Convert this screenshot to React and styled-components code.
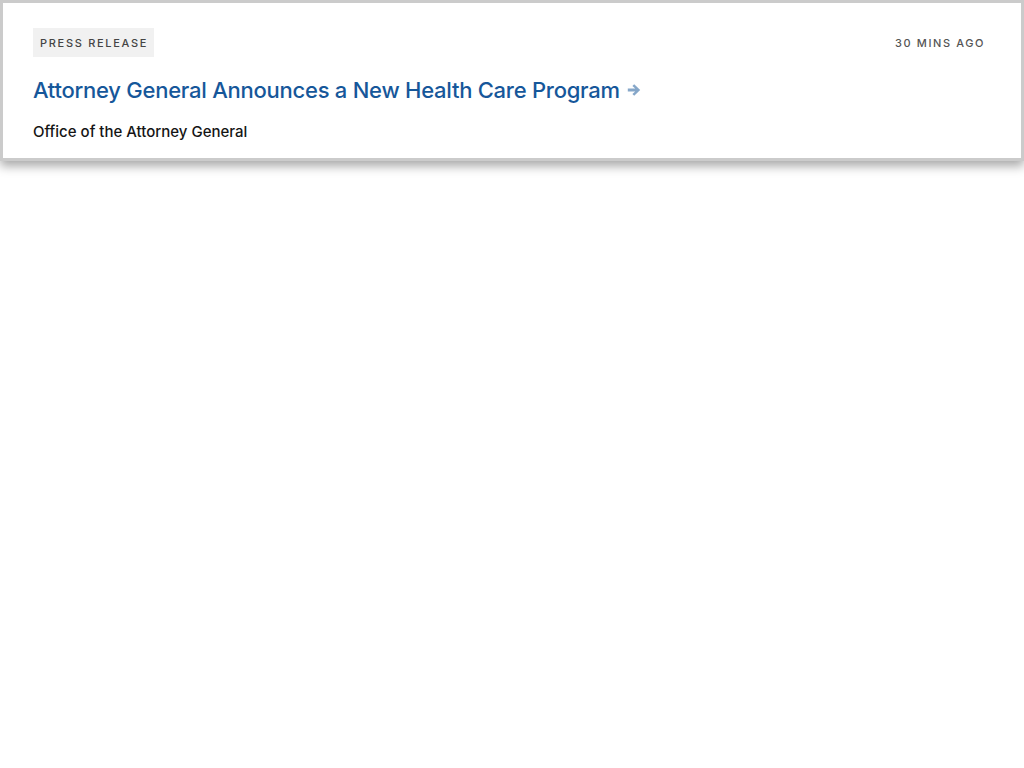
import React from "react";
import styled, { createGlobalStyle } from "styled-components";

const Global = createGlobalStyle`
  html, body { margin: 0; padding: 0; background: #fff; }
  body { font-family: Inter, "Noto Sans", sans-serif; }
`;

const Page = styled.main`
  padding-bottom: 20px;
`;

const Card = styled.article`
  position: relative;
  box-sizing: border-box;
  width: 100%;
  height: 161px;
  border: 3px solid #cbcbcb;
  box-shadow: 0 5px 10px 0 rgba(0, 0, 0, 0.35);
  background: #fff;
  padding: 25px 36px 0 30px;
`;

const Header = styled.div`
  display: flex;
  justify-content: space-between;
  align-items: center;
`;

const Badge = styled.span`
  display: inline-flex;
  align-items: center;
  height: 29px;
  padding: 0 6px 0 7px;
  background: #f1f1f1;
  color: #444;
  font-size: 11px;
  font-weight: 500;
  letter-spacing: 1.7px;
  text-transform: uppercase;
`;

const Time = styled.span`
  color: #555;
  font-size: 11px;
  font-weight: 500;
  letter-spacing: 1.6px;
  text-transform: uppercase;
`;

const Title = styled.h2`
  margin: 19px 0 0;
  display: flex;
  align-items: center;
  gap: 7px;
  font-size: 22px;
  font-weight: 500;
  letter-spacing: -0.25px;
  line-height: 28px;
`;

const TitleLink = styled.a`
  color: #16579a;
  text-decoration: none;
`;

const Arrow = styled.svg`
  width: 14px;
  height: 14px;
  fill: #86a7c9;
  flex: none;
`;

const Source = styled.div`
  margin-top: 18px;
  color: #151515;
  font-size: 15px;
  font-weight: 500;
  line-height: 20px;
`;

export default function App() {
  return (
    <Page>
      <Global />
      <Card>
        <Header>
          <Badge>Press Release</Badge>
          <Time>30 mins ago</Time>
        </Header>
        <Title>
          <TitleLink href="#">Attorney General Announces a New Health Care Program</TitleLink>
          <Arrow viewBox="0 0 14 14" aria-hidden="true">
            <path d="M7.2 1.2 L13.2 7 L7.2 12.8 L5.4 11 L8.2 8.4 H0.8 V5.6 H8.2 L5.4 3 Z" />
          </Arrow>
        </Title>
        <Source>Office of the Attorney General</Source>
      </Card>
    </Page>
  );
}
